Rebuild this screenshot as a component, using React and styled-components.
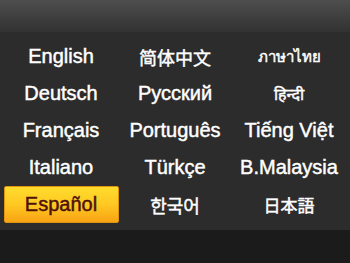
import React, { useState } from 'react';
import styled, { createGlobalStyle } from 'styled-components';

const GlobalStyle = createGlobalStyle`
  html, body {
    margin: 0;
    padding: 0;
    background: #1b1b1b;
  }
  body {
    font-family: "Liberation Sans", Arial, "Noto Sans", sans-serif;
  }
`;

const Screen = styled.div`
  width: 350px;
  height: 263px;
  display: flex;
  flex-direction: column;
  background: #1b1b1b;
  overflow: hidden;
`;

const TopBar = styled.div`
  height: 32px;
  flex-shrink: 0;
  background: linear-gradient(to bottom, #4e4e4e 0%, #3e3e3e 55%, #323232 100%);
`;

const Panel = styled.div`
  height: 198px;
  background: #2c2c2c;
  padding: 6px 4px 7px 4px;
  box-sizing: border-box;
`;

const Grid = styled.div`
  display: grid;
  grid-template-columns: repeat(3, 1fr);
  grid-auto-rows: 37px;
`;

const Item = styled.div`
  display: flex;
  align-items: center;
  justify-content: center;
  box-sizing: border-box;
  font-size: ${(p) => p.$size || 20}px;
  color: ${(p) => (p.$active ? '#4c1208' : '#ffffff')};
  -webkit-text-stroke: 0.45px ${(p) => (p.$active ? '#4c1208' : '#ffffff')};
  font-family: ${(p) =>
    p.$cjk
      ? `"Noto Sans CJK ${p.$cjk}", "Noto Sans", sans-serif`
      : '"Liberation Sans", Arial, "Noto Sans", sans-serif'};
  background: ${(p) =>
    p.$active ? 'linear-gradient(to bottom, #ffdc2e 0%, #ffc822 50%, #f8a414 100%)' : 'transparent'};
  border: 1px solid ${(p) => (p.$active ? '#e0940f' : 'transparent')};
  border-radius: 2px;
  margin: 0 -0.5px;
  cursor: pointer;
  white-space: nowrap;
`;

const languages = [
  { label: 'English' },
  { label: '简体中文', cjk: 'SC', size: 18 },
  { label: 'ภาษาไทย', size: 15 },
  { label: 'Deutsch' },
  { label: 'Русский' },
  { label: 'हिन्दी', size: 16 },
  { label: 'Français' },
  { label: 'Português' },
  { label: 'Tiếng Việt' },
  { label: 'Italiano' },
  { label: 'Türkçe' },
  { label: 'B.Malaysia' },
  { label: 'Español' },
  { label: '한국어', cjk: 'KR', size: 18 },
  { label: '日本語', cjk: 'JP', size: 17 },
];

const App = () => {
  const [selected, setSelected] = useState('Español');

  return (
    <>
      <GlobalStyle />
      <Screen>
        <TopBar />
        <Panel>
          <Grid>
            {languages.map((lang) => (
              <Item
                key={lang.label}
                $size={lang.size}
                $cjk={lang.cjk}
                $active={selected === lang.label}
                onClick={() => setSelected(lang.label)}
              >
                {lang.label}
              </Item>
            ))}
          </Grid>
        </Panel>
      </Screen>
    </>
  );
};

export default App;
